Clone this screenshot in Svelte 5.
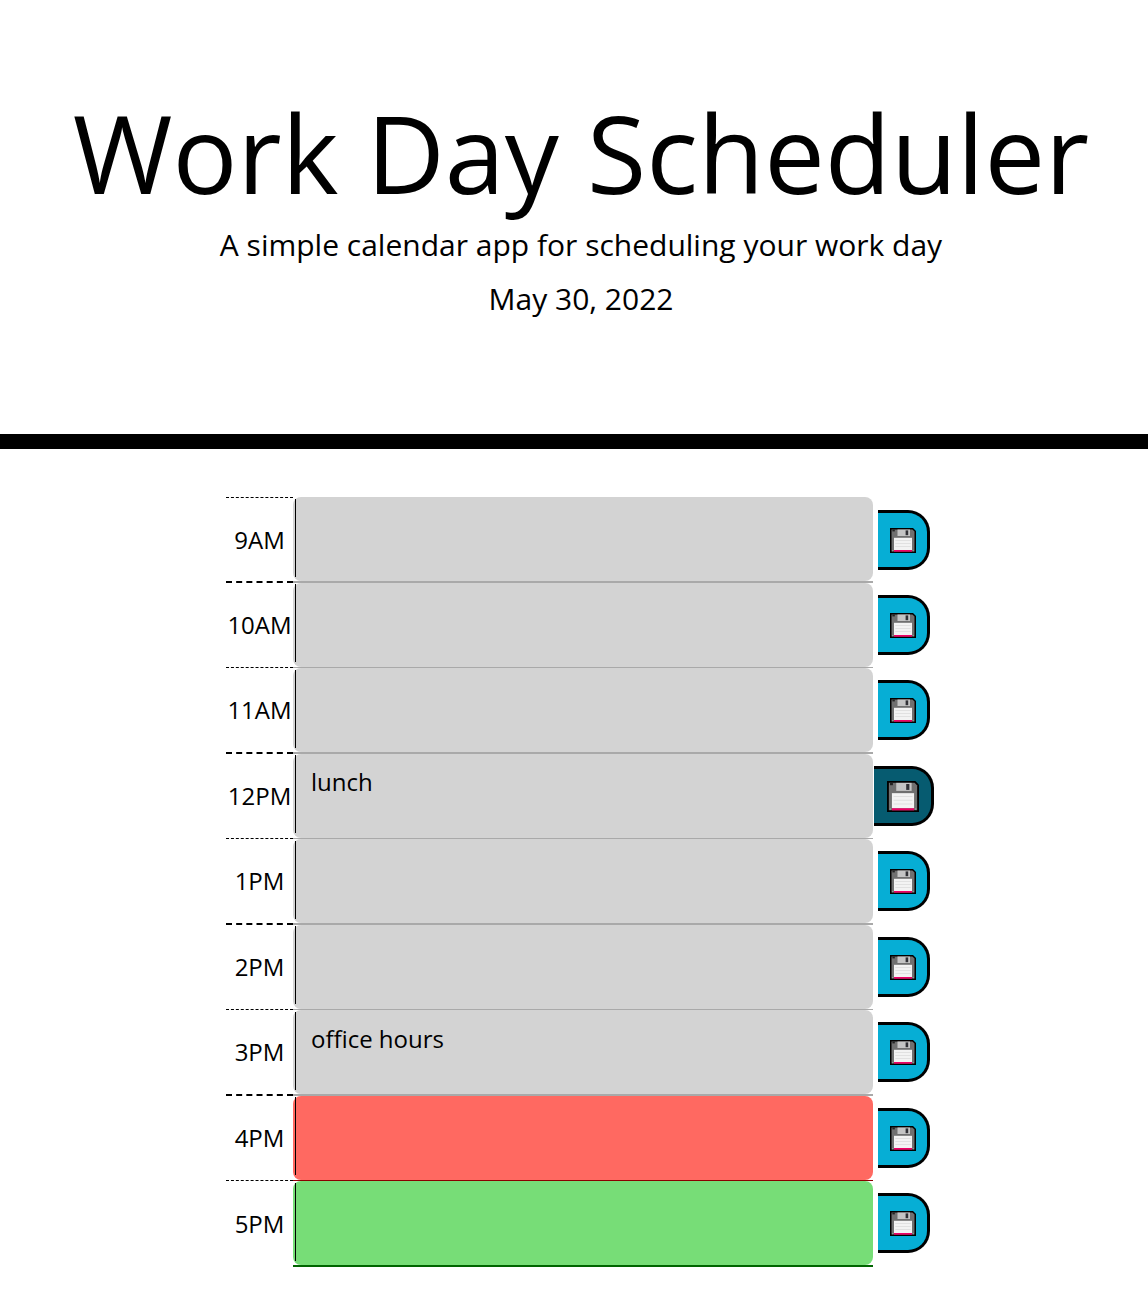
<script>
  const blocks = [
    { hour: '9AM', state: 'past', text: '' },
    { hour: '10AM', state: 'past', text: '' },
    { hour: '11AM', state: 'past', text: '' },
    { hour: '12PM', state: 'past', text: 'lunch', active: true },
    { hour: '1PM', state: 'past', text: '' },
    { hour: '2PM', state: 'past', text: '' },
    { hour: '3PM', state: 'past', text: 'office hours' },
    { hour: '4PM', state: 'present', text: '' },
    { hour: '5PM', state: 'future', text: '' }
  ];
</script>

<header>
  <h1>Work Day Scheduler</h1>
  <p class="lead">A simple calendar app for scheduling your work day</p>
  <p class="date">May 30, 2022</p>
</header>

<main>
  {#each blocks as block}
    <div class="row {block.state}">
      <div class="hour">{block.hour}</div>
      <div class="slot"><div class="entry"><div class="text">{block.text}</div></div></div>
      <div class="action">
        <button class="save" class:active={block.active} aria-label="Save">
          <svg viewBox="0 0 26 25" preserveAspectRatio="none">
            <path d="M0 0H23L26 3V25H0Z" fill="#000" />
            <path d="M1.5 1.5H22.4L24.5 3.6V23.5H1.5Z" fill="#707070" />
            <path d="M2.4 1.5H4.8V3.4H2.4Z" fill="#222" />
            <path d="M7.5 1.5H20V8H7.5Z" fill="#c4c4c4" />
            <path d="M15.6 2.4H18.2V7.2H15.6Z" fill="#303035" />
            <path d="M4 9.8H22V22H4Z" fill="#f3f3f3" />
            <path d="M5.3 12.5H20.7M5.3 15.5H20.7M5.3 18.5H20.7" stroke="#dfdfdf" stroke-width="0.9" />
            <path d="M4 22H22V23.7H4Z" fill="#ee0065" />
            <path d="M2.2 22H3.2V23.2H2.2ZM22.8 22H23.8V23.2H22.8Z" fill="#999" />
          </svg>
        </button>
      </div>
    </div>
  {/each}
</main>

<style>
  :global(body) {
    background: #fff;
    color: #000;
    font-family: 'Open Sans', sans-serif;
    overflow: hidden;
  }

  header {
    box-sizing: border-box;
    height: 449px;
    padding: 78px 0 0 14px;
    border-bottom: 15px solid #000;
    text-align: center;
    white-space: nowrap;
  }

  h1 {
    margin: 0;
    font-size: 108px;
    font-weight: 400;
    line-height: 150px;
  }

  p {
    margin: 0;
    font-size: 30px;
    line-height: 54px;
  }

  .lead {
    margin-top: -10px;
  }

  main {
    width: 722px;
    padding: 48px 0 0 226px;
  }

  .row {
    --line: #a9a9a9;
    --fill: #d3d3d3;
    display: grid;
    grid-template-columns: 67px 580px 75px;
    grid-template-rows: 100%;
    height: 86px;
  }

  .row:nth-child(even) {
    height: 85px;
  }

  .present {
    --line: #8b0000;
    --fill: #ff6961;
  }

  .future {
    --line: #006400;
    --fill: #77dd77;
  }

  .hour,
  .slot {
    box-sizing: border-box;
    border-bottom: 2px solid var(--line);
  }

  .row:nth-child(even) > .hour,
  .row:nth-child(even) > .slot {
    border-bottom-width: 1px;
  }

  .row > .hour {
    border-bottom-color: #000;
    border-bottom-style: dashed;
    font-size: 24px;
    line-height: 84px;
    text-align: center;
  }

  .row:first-child > .hour {
    border-top: 1px dashed #000;
  }

  .row:last-child > .hour {
    border-bottom-color: transparent;
    line-height: 86px;
  }

  .entry {
    box-sizing: border-box;
    height: 84px;
    padding: 2px 0 4px 2px;
    border-radius: 8px;
    background: var(--fill);
  }

  .row:nth-child(even) .entry {
    padding-top: 1px;
  }

  .text {
    box-sizing: border-box;
    height: 78px;
    padding: 10px 15px;
    border-left: 1px solid #000;
    font-size: 24px;
    line-height: 33px;
  }

  .action {
    padding: 12px 0 0 5px;
  }

  .row:first-child .action {
    padding-top: 13px;
  }

  .save {
    box-sizing: border-box;
    display: flex;
    align-items: center;
    width: 52px;
    height: 60px;
    padding: 1px 0 0 12px;
    border: 3px solid #000;
    border-left: 0;
    border-radius: 0 22px 22px 0;
    background: #06aed5;
  }

  .save svg {
    display: block;
    width: 26px;
    height: 25px;
    flex: none;
  }

  .save.active {
    width: 60px;
    margin-left: -4px;
    padding-left: 13px;
    background: #065b70;
  }

  .save.active svg {
    width: 32px;
    height: 31px;
  }
</style>
